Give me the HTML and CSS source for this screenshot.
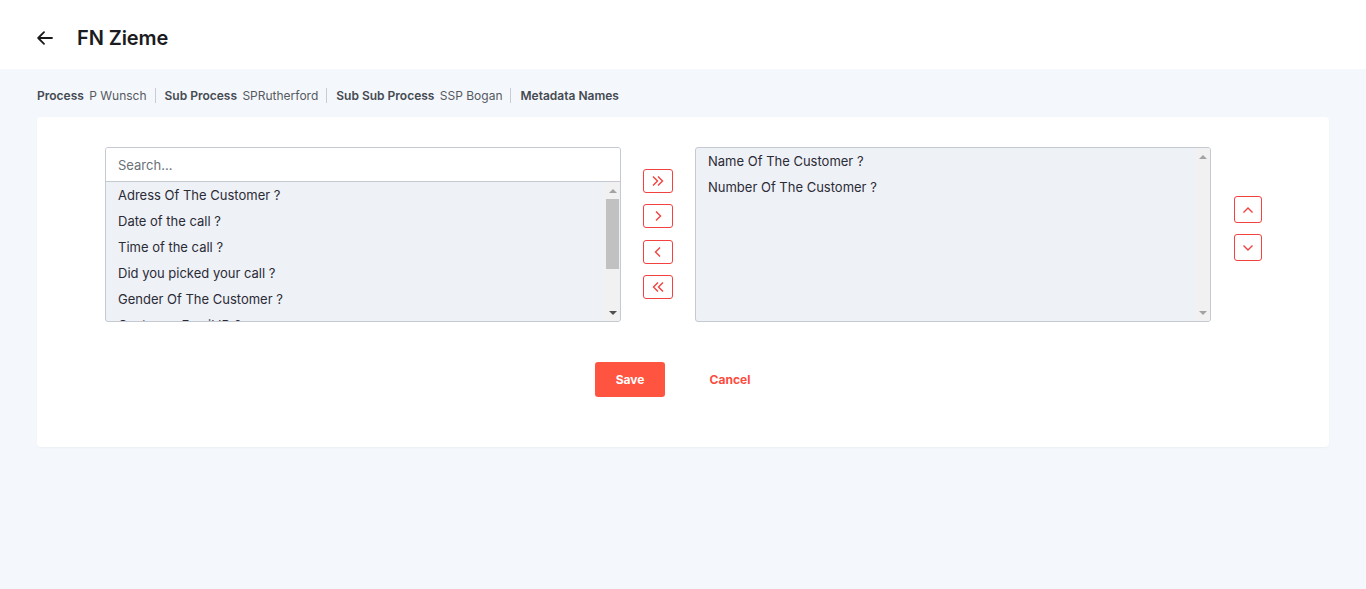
FILE: index.html
```html
<!DOCTYPE html>
<html lang="en">
<head>
<meta charset="utf-8">
<title>FN Zieme</title>
<link rel="stylesheet" href="styles.css">
</head>
<body>
<header class="topbar">
  <button class="back" aria-label="Back">
    <svg width="16" height="14" viewBox="0 0 16 14" fill="none" stroke="#1a1a1a" stroke-width="1.8" stroke-linecap="round" stroke-linejoin="round"><path d="M15 7H1.5M7 1.2L1.2 7 7 12.8"/></svg>
  </button>
  <h1 class="title">FN Zieme</h1>
</header>
<main class="main">
  <nav class="crumbs">
    <span class="crumb"><b>Process</b> P Wunsch</span>
    <span class="sep"></span>
    <span class="crumb"><b>Sub Process</b> SPRutherford</span>
    <span class="sep"></span>
    <span class="crumb"><b>Sub Sub Process</b> SSP Bogan</span>
    <span class="sep"></span>
    <span class="crumb"><b>Metadata Names</b></span>
  </nav>
  <section class="card">
    <div class="dual">
      <div class="box">
        <input class="search" type="text" placeholder="Search...">
        <div class="body">
          <ul class="list">
            <li>Adress Of The Customer ?</li>
            <li>Date of the call ?</li>
            <li>Time of the call ?</li>
            <li>Did you picked your call ?</li>
            <li>Gender Of The Customer ?</li>
            <li>Customer Email ID ?</li>
          </ul>
          <div class="sbar">
            <span class="arr up off"></span>
            <span class="thumb"></span>
            <span class="fill"></span>
            <span class="arr down"></span>
          </div>
        </div>
      </div>
      <div class="moves">
        <button class="mv" aria-label="Move all right"><svg width="14" height="12" viewBox="0 0 14 12" fill="none" stroke="#f2413e" stroke-width="1.4"><path d="M2 1.5l4.5 4.5L2 10.5M7 1.5l4.5 4.5L7 10.5"/></svg></button>
        <button class="mv" aria-label="Move right"><svg width="14" height="12" viewBox="0 0 14 12" fill="none" stroke="#f2413e" stroke-width="1.4"><path d="M5 1.5l4.5 4.5L5 10.5"/></svg></button>
        <button class="mv" aria-label="Move left"><svg width="14" height="12" viewBox="0 0 14 12" fill="none" stroke="#f2413e" stroke-width="1.4"><path d="M9 1.5L4.5 6 9 10.5"/></svg></button>
        <button class="mv" aria-label="Move all left"><svg width="14" height="12" viewBox="0 0 14 12" fill="none" stroke="#f2413e" stroke-width="1.4"><path d="M7 1.5L2.5 6 7 10.5M12 1.5L7.5 6 12 10.5"/></svg></button>
      </div>
      <div class="box">
        <div class="body">
          <ul class="list">
            <li>Name Of The Customer ?</li>
            <li>Number Of The Customer ?</li>
          </ul>
          <div class="sbar">
            <span class="arr up off"></span>
            <span class="fill"></span>
            <span class="arr down off"></span>
          </div>
        </div>
      </div>
      <div class="order">
        <button class="ud" aria-label="Move up"><svg width="14" height="10" viewBox="0 0 14 10" fill="none" stroke="#f2413e" stroke-width="1.4"><path d="M2.5 7.5L7 3l4.5 4.5"/></svg></button>
        <button class="ud" aria-label="Move down"><svg width="14" height="10" viewBox="0 0 14 10" fill="none" stroke="#f2413e" stroke-width="1.4"><path d="M2.5 2.5L7 7l4.5-4.5"/></svg></button>
      </div>
    </div>
    <div class="actions">
      <button class="save">Save</button>
      <button class="cancel">Cancel</button>
    </div>
  </section>
</main>
</body>
</html>
```
FILE: styles.css
```css
* { box-sizing: border-box; }
html, body { margin: 0; padding: 0; }
body {
  font-family: Inter, "Noto Sans", sans-serif;
  background: #f4f7fb;
  color: #2b2b36;
  height: 589px;
}
button { font-family: inherit; cursor: pointer; }

.topbar {
  height: 69px;
  background: #ffffff;
  display: flex;
  align-items: center;
  padding: 6px 0 0 37px;
}
.back {
  border: 0;
  background: none;
  padding: 0;
  width: 16px;
  height: 14px;
  display: flex;
  margin-top: 1px;
}
.title {
  margin: 0 0 0 24px;
  font-size: 20px;
  font-weight: 600;
  color: #1b1b22;
  letter-spacing: -0.1px;
}

.main { padding: 0 37px; }

.crumbs {
  display: flex;
  align-items: center;
  height: 48px;
  padding-top: 5px;
  font-size: 12px;
  color: #555a61;
}
.crumb b { font-weight: 600; color: #454a52; margin-right: 2px; }
.sep {
  width: 1px;
  height: 15px;
  background: #c9cdd3;
  margin: 0 9px 0 8px;
}

.card {
  background: #ffffff;
  border-radius: 4px;
  box-shadow: 0 1px 2px rgba(0, 0, 0, 0.04);
  padding: 30px 0 50px;
  height: 330px;
}
.dual {
  display: flex;
  justify-content: center;
  align-items: stretch;
  padding-left: 1px;
}
.box {
  width: 516px;
  height: 175px;
  border: 1px solid #c4c9d2;
  border-radius: 3px;
  background: #eef1f6;
  display: flex;
  flex-direction: column;
  overflow: hidden;
}
.search {
  height: 34px;
  flex: none;
  border: 0;
  border-bottom: 1px solid #c4c9d2;
  background: #fff;
  padding: 0 12px;
  font-family: inherit;
  font-size: 13px;
  color: #333;
  outline: none;
}
.search::placeholder { color: #6b7078; }
.body {
  flex: 1;
  min-height: 0;
  display: flex;
}
.list {
  list-style: none;
  margin: 0;
  padding: 0;
  flex: 1;
  overflow: hidden;
  font-size: 13px;
  color: #2b2b36;
}
.list li {
  height: 26px;
  line-height: 26px;
  padding: 0 12px;
  white-space: nowrap;
}
.sbar {
  width: 15px;
  flex: none;
  background: #f1f1f1;
  display: flex;
  flex-direction: column;
  align-items: center;
}
.arr {
  height: 17px;
  width: 15px;
  flex: none;
  display: flex;
  align-items: center;
  justify-content: center;
}
.arr::before {
  content: "";
  width: 0;
  height: 0;
  border-left: 4px solid transparent;
  border-right: 4px solid transparent;
}
.arr.up::before { border-bottom: 4px solid #505050; }
.arr.down::before { border-top: 4px solid #505050; }
.arr.up.off::before { border-bottom-color: #a3a3a3; }
.arr.down.off::before { border-top-color: #a3a3a3; }
.thumb {
  width: 13px;
  height: 70px;
  flex: none;
  background: #c1c1c1;
}
.fill { flex: 1; }

.moves {
  display: flex;
  flex-direction: column;
  justify-content: center;
  gap: 11.5px;
  margin: 0 22px;
  padding-bottom: 1px;
}
.mv, .ud {
  border: 1px solid #f2413e;
  border-radius: 3px;
  background: #fff;
  padding: 0;
  display: flex;
  align-items: center;
  justify-content: center;
}
.mv { width: 30px; height: 24px; }
.order {
  display: flex;
  flex-direction: column;
  justify-content: center;
  gap: 11px;
  margin-left: 23px;
  padding-bottom: 12px;
}
.ud { width: 28px; height: 27px; }

.actions {
  display: flex;
  justify-content: center;
  gap: 30px;
  margin-top: 40px;
  padding-right: 6px;
}
.save, .cancel {
  width: 70px;
  height: 35px;
  border-radius: 3px;
  font-size: 12px;
  font-weight: 700;
  border: 0;
}
.save { background: #ff5540; color: #fff; }
.cancel { background: transparent; color: #ff4b3e; }
```
